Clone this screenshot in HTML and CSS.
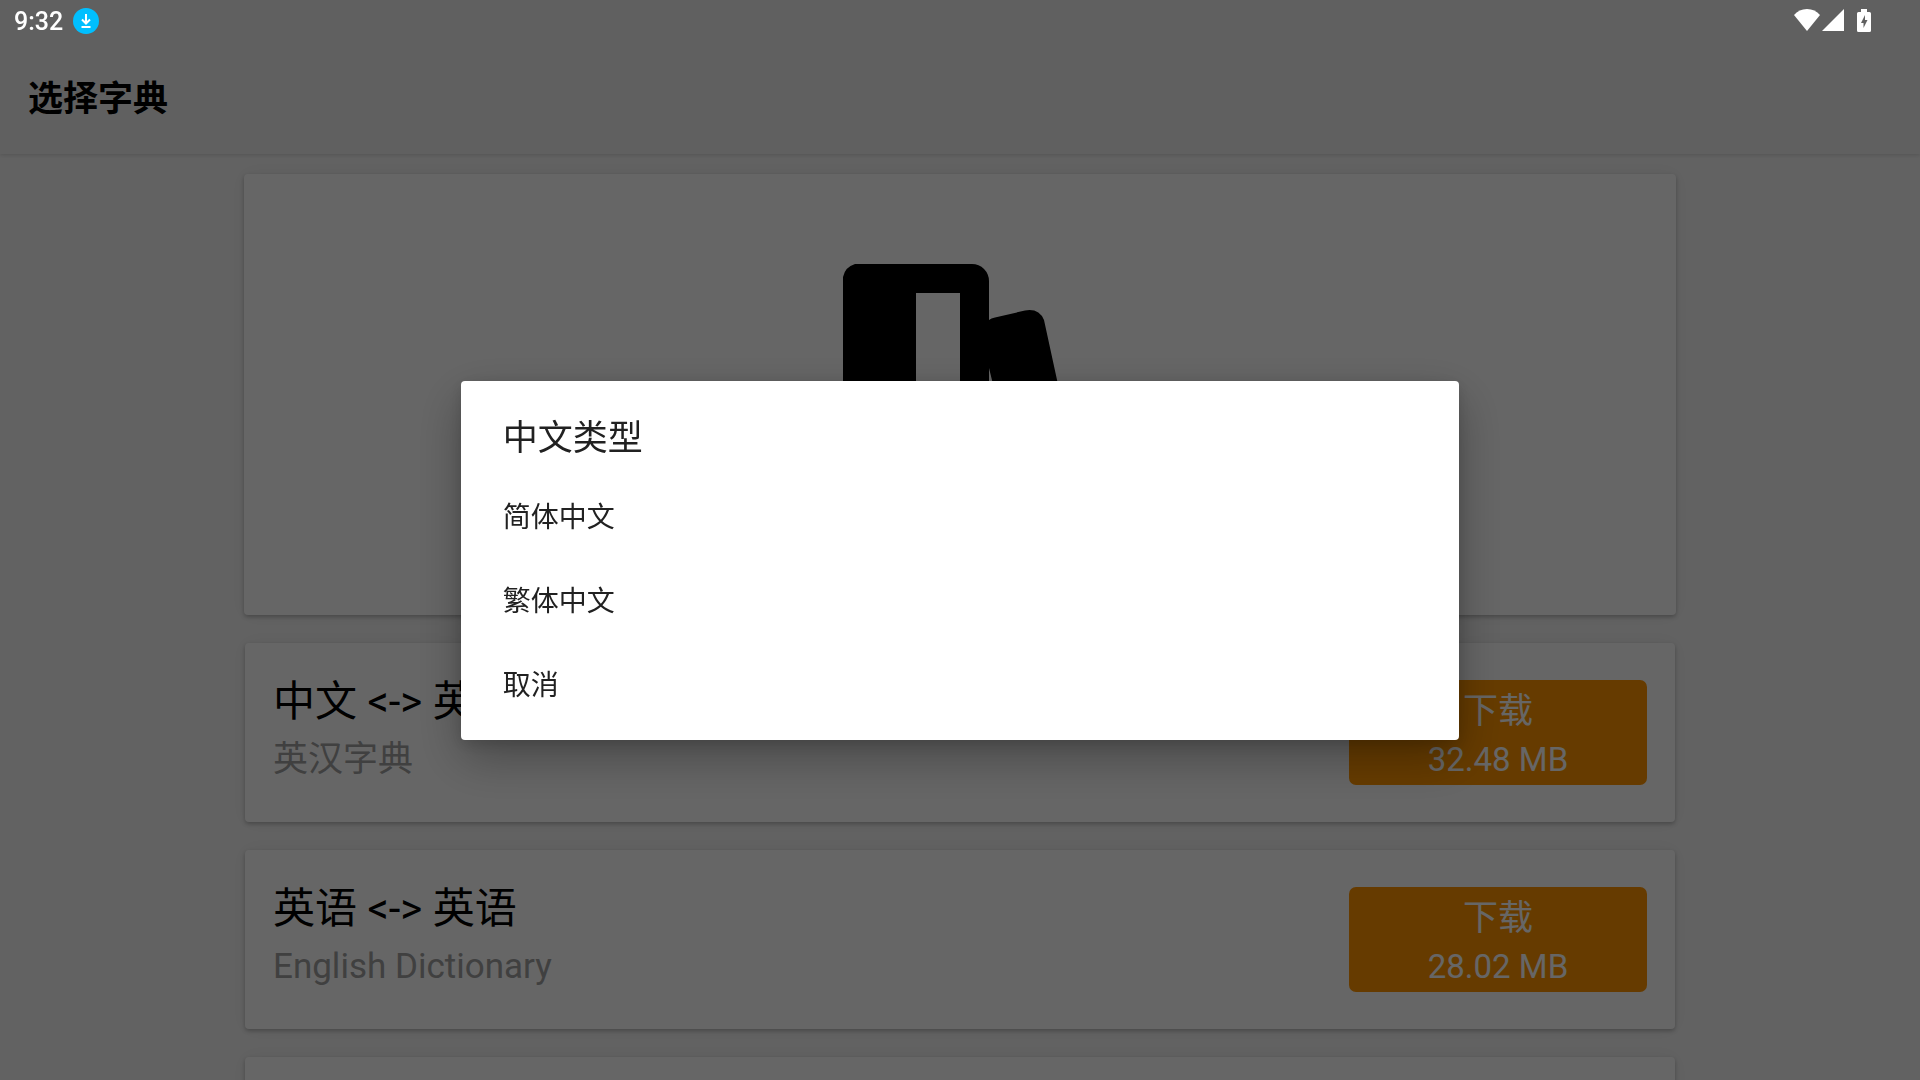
FILE: index.html
```html
<!DOCTYPE html>
<html lang="zh-CN">
<head>
    <meta charset="UTF-8">
    <meta name="viewport" content="width=device-width, initial-scale=1.0">
    <title>选择字典</title>
    <link rel="stylesheet" href="styles.css">
</head>
<body>
    <header class="app-bar">
        <h1>选择字典</h1>
    </header>

    <main class="list">
        <section class="card hero">
            <svg class="books" viewBox="0 0 234 264" aria-hidden="true">
                <path fill-rule="evenodd" d="M12 0H129A17 17 0 0 1 146 17V56Q148 54 152 53.500L182 46.500Q196 44 201 56L234 208Q236 220 224 224L190 232Q178 234 175 222L146 104V252Q146 264 134 264H12Q0 264 0 252V13Q2 3 12 0ZM73 29V190H117V29Z"/>
            </svg>
        </section>

        <section class="card row">
            <div class="info">
                <h2>中文 &lt;-&gt; 英语</h2>
                <p>英汉字典</p>
            </div>
            <button class="download" type="button">下载<span class="size">32.48 MB</span></button>
        </section>

        <section class="card row">
            <div class="info">
                <h2>英语 &lt;-&gt; 英语</h2>
                <p>English Dictionary</p>
            </div>
            <button class="download" type="button">下载<span class="size">28.02 MB</span></button>
        </section>

        <section class="card row"></section>
    </main>

    <!-- Finestra di scelta -->
    <div class="overlay">
        <div class="dialog" role="dialog" aria-modal="true" aria-labelledby="dialog-title">
            <h2 id="dialog-title">中文类型</h2>
            <button type="button">简体中文</button>
            <button type="button">繁体中文</button>
            <button type="button">取消</button>
        </div>
    </div>

    <!-- Barra di stato -->
    <div class="status-bar">
        <span class="clock">9:32</span>
        <svg class="badge" viewBox="0 0 26 26" aria-hidden="true">
            <circle cx="13" cy="13" r="13" fill="#00bfff"/>
            <path d="M13 6V15M9 11.500L13 15.500L17 11.500M8.500 19H17.500" fill="none" stroke="#fff" stroke-width="2"/>
        </svg>
        <div class="system-icons">
            <svg width="26" height="22" viewBox="0 0 26 22" aria-hidden="true">
                <path d="M13 22L0 6Q5 0 13 0Q21 0 26 6Z"/>
            </svg>
            <svg width="22" height="22" viewBox="0 0 22 22" aria-hidden="true">
                <path d="M22 0V22H0Z"/>
            </svg>
            <svg class="battery" width="14" height="23" viewBox="0 0 14 23" aria-hidden="true">
                <path fill-rule="evenodd" d="M4 0H10V3H12.500Q14 3 14 4.500V21.500Q14 23 12.500 23H1.500Q0 23 0 21.500V4.500Q0 3 1.500 3H4ZM8 6L4 14H6.500V19L10.500 11H8Z"/>
            </svg>
        </div>
    </div>
</body>
</html>
```

FILE: styles.css
```css
* {
    margin: 0;
    padding: 0;
    box-sizing: border-box;
}

body {
    display: flex;
    flex-direction: column;
    height: 100vh;
    overflow: hidden;
    background: #f5f5f5;
    color: #000;
    font-family: Roboto, "Noto Sans CJK SC", sans-serif;
    font-size: 35px;
}

button {
    border: 0;
    background: none;
    font: inherit;
    cursor: pointer;
}

h1,
h2 {
    font-size: inherit;
    font-weight: 400;
}

/* Barra in alto */
.app-bar {
    position: relative;
    padding: 75px 28px 29px;
    background: #f0f0f0;
    box-shadow: 0 1px 4px rgba(0, 0, 0, 0.15);
}

.app-bar h1 {
    font-weight: 700;
    line-height: 50px;
}

/* Elenco dei dizionari */
.list {
    display: flex;
    flex: 1;
    flex-direction: column;
    gap: 28px;
    min-height: 0;
    padding: 20px 244px 0;
    overflow: hidden;
}

.card {
    flex: none;
    border-radius: 4px;
    background: #fff;
    box-shadow: 0 2px 4px rgba(0, 0, 0, 0.25), 0 0 20px rgba(0, 0, 0, 0.05);
}

.hero {
    padding: 90px 28px 87px;
    text-align: center;
}

.books {
    display: block;
    width: 234px;
    margin: 0 auto;
}

.row {
    display: flex;
    justify-content: space-between;
    align-items: center;
    height: 179px;
    margin: 0 1px;
    padding: 0 28px;
}

.info {
    padding-bottom: 8px;
}

.info h2 {
    font-size: 42px;
    line-height: 56px;
}

.info p {
    margin-top: 6px;
    color: #a0a0a0;
    line-height: 48px;
}

.download {
    width: 298px;
    padding: 8px 0 1px;
    border-radius: 7px;
    background: #ff9500;
    color: #fff;
    line-height: 48px;
}

.size {
    display: block;
    font-size: 33px;
}

/* Velo scuro e finestra */
.overlay {
    position: fixed;
    inset: 0;
    display: flex;
    justify-content: center;
    align-items: center;
    padding-top: 40px;
    background: rgba(0, 0, 0, 0.6);
}

.dialog {
    width: 52%;
    padding: 33px 0 12px;
    border-radius: 4px;
    background: #fff;
    color: #212121;
    box-shadow: 0 18px 48px rgba(0, 0, 0, 0.3), 0 4px 16px rgba(0, 0, 0, 0.15);
}

.dialog h2 {
    padding: 0 42px 12px;
    line-height: 50px;
}

.dialog button {
    display: block;
    width: 100%;
    padding: 0 42px;
    color: inherit;
    font-size: 28px;
    line-height: 84px;
    text-align: left;
}

/* Barra di stato */
.status-bar {
    position: fixed;
    top: 0;
    left: 0;
    right: 0;
    display: flex;
    align-items: center;
    height: 42px;
    padding: 0 49px 0 14px;
    color: #fff;
}

.clock {
    font-size: 25px;
    font-weight: 500;
}

.badge {
    width: 26px;
    margin-left: 10px;
}

.system-icons {
    display: flex;
    gap: 2px;
    height: 24px;
    margin-left: auto;
    align-items: center;
    align-self: flex-start;
    margin-top: 8px;
    fill: #fff;
}

.battery {
    margin-left: 11px;
}
```
